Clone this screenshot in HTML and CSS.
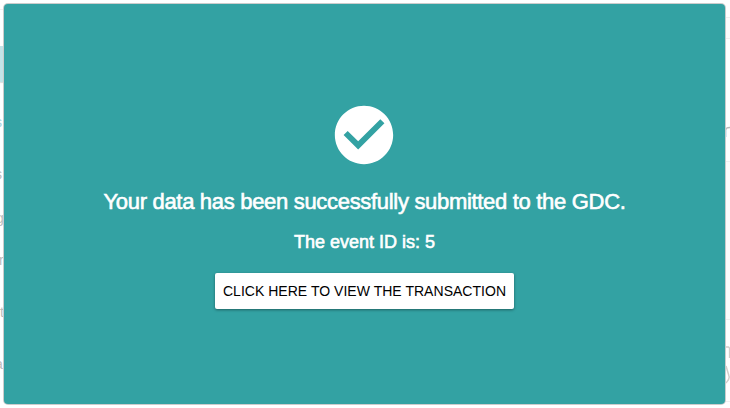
FILE: index.html
```html
<!DOCTYPE html>
<html lang="en">
<head>
<meta charset="utf-8">
<title>Submission complete</title>
<link rel="stylesheet" href="styles.css">
</head>
<body>
<div class="behind" aria-hidden="true">
  <i class="rule rule-top"></i>
  <i class="tab"></i>
  <i class="band band-top"></i>
  <i class="band band-mid"></i>
  <i class="rule rule-low"></i>
  <span class="bit link">s</span>
  <span class="bit row-a">s</span>
  <span class="bit row-b">g</span>
  <span class="bit row-c">r</span>
  <span class="bit row-d">t</span>
  <span class="bit row-e">a</span>
  <svg class="edge" width="4" height="270" viewBox="0 0 4 270">
    <path d="M0 11.5V8.5Q1 7.5 4 7.5" fill="none" stroke="#bbb" stroke-width="1.3"/>
    <path d="M.5 10v7" stroke="#d9eaf3"/>
    <path d="M0 227h2.3q1.2 0 1.2 2v9" fill="none" stroke="#d3cdca" stroke-width="1.3"/>
    <path d="M0 246l3 10q1 3-3 7" fill="none" stroke="#d3cdca" stroke-width="1.5"/>
  </svg>
</div>
<main class="dialog">
  <svg class="check" viewBox="0 0 24 24" aria-hidden="true"><path d="M12 2C6.48 2 2 6.48 2 12s4.48 10 10 10 10-4.48 10-10S17.52 2 12 2zm-2 15l-5-5 1.41-1.41L10 14.17l7.59-7.59L19 8l-9 9z"/></svg>
  <h1 class="title">Your data has been successfully submitted to the GDC.</h1>
  <p class="event">The event ID is: 5</p>
  <button class="action" type="button">CLICK HERE TO VIEW THE TRANSACTION</button>
</main>
</body>
</html>
```
FILE: styles.css
```css
* { box-sizing: border-box; }
body {
  margin: 0;
  width: 730px;
  height: 408px;
  padding: 4px 5px 4px 4px;
  overflow: hidden;
  background: #fff;
  font-family: "Liberation Sans", Arial, sans-serif;
}
.behind { position: absolute; inset: 0; overflow: hidden; }
.behind > * { position: absolute; }
.rule { height: 1px; background: #f0f0f0; }
.rule-top { top: 9px; left: 0; width: 4px; }
.rule-low { top: 401px; right: 0; width: 5px; }
.tab { top: 46px; left: 0; width: 4px; height: 36px; background: #c3e3e7; box-shadow: 0 1px 1px #ddd; }
.band { right: 0; width: 5px; background: #fcfcfc; border: solid #f0f0f0; border-width: 1px 0; }
.band-top { top: 17px; height: 22px; }
.band-mid { top: 161px; height: 159px; }
.bit { left: 0; font-size: 14px; line-height: 16px; color: #bbb; }
.link { top: 114px; left: -5px; color: #a5d5e0; }
.row-a { top: 166px; left: -5px; }
.row-b { top: 210px; left: -4px; }
.row-c { top: 252px; left: -1px; }
.row-d { top: 304px; }
.row-e { top: 356px; left: -5px; }
.edge { top: 120px; right: 0; }
.dialog {
  position: relative;
  display: flex;
  flex-direction: column;
  align-items: center;
  height: 400px;
  padding-top: 96px;
  border-radius: 4px;
  background: #33a2a3;
  box-shadow: 0 0 0 1px #ccc;
  color: #fff;
}
.check { width: 70px; height: 70px; margin-right: 1px; fill: #fff; }
.title {
  margin: 19px 0 0;
  font-size: 22px;
  line-height: 26px;
  font-weight: 400;
  letter-spacing: -.31px;
  -webkit-text-stroke: .6px #fff;
  white-space: nowrap;
}
.event {
  margin: 16px 0 0;
  font-size: 18px;
  line-height: 22px;
  -webkit-text-stroke: .6px #fff;
  white-space: nowrap;
}
.action {
  width: 299px;
  height: 36px;
  margin: 20px 0 0;
  padding: 0;
  border: 0;
  border-radius: 2px;
  background: #fff;
  box-shadow: 0 1px 3px rgba(0, 0, 0, .4);
  color: #000;
  font: 14px/36px "Liberation Sans", Arial, sans-serif;
  letter-spacing: .03px;
  white-space: nowrap;
}
```
